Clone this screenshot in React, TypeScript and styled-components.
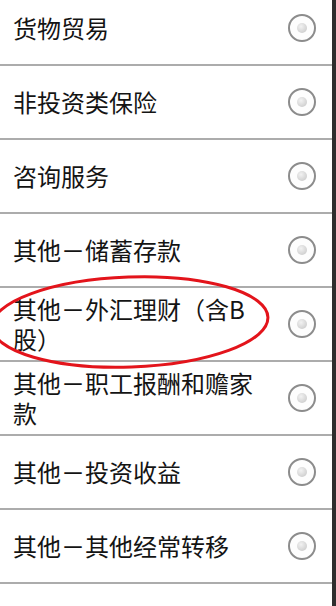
import React from "react";
import styled, { createGlobalStyle } from "styled-components";

const Global = createGlobalStyle`
  html, body { margin: 0; padding: 0; background: #fff; }
  body { font-family: "Noto Sans CJK SC", "Noto Sans", sans-serif; overflow: hidden; }
`;

const Page = styled.div`
  position: relative;
  width: 336px;
  height: 606px;
  overflow: hidden;
  box-sizing: border-box;
  border-right: 4px solid #2e2e2e;
  background: #fff;
`;

const List = styled.ul`
  list-style: none;
  margin: -8px 0 0 0;
  padding: 0;
`;

const Row = styled.li`
  display: flex;
  align-items: center;
  height: 72px;
  border-bottom: 2px solid #acacac;
  padding: 0 16px 0 13px;
  box-sizing: content-box;
`;

const Label = styled.span`
  width: 252px;
  font-size: 24px;
  line-height: 30px;
  color: #141414;
  word-break: normal;
`;

const Radio = styled.span`
  margin-left: auto;
  width: 28px;
  height: 28px;
  box-sizing: border-box;
  border: 2px solid #8c8c8c;
  border-radius: 50%;
  display: flex;
  align-items: center;
  justify-content: center;
  background: #fdfdfd;
  &::after {
    content: "";
    width: 10px;
    height: 10px;
    border-radius: 50%;
    background: radial-gradient(circle at 40% 35%, #f2f2f2, #c4c4c4);
  }
`;

const Mark = styled.svg`
  position: absolute;
  left: 0;
  top: 0;
  pointer-events: none;
`;

const items = [
  "货物贸易",
  "非投资类保险",
  "咨询服务",
  "其他－储蓄存款",
  "其他－外汇理财（含B股）",
  "其他－职工报酬和赡家款",
  "其他－投资收益",
  "其他－其他经常转移",
];

export default function App() {
  return (
    <>
      <Global />
      <Page>
        <List>
          {items.map((t) => (
            <Row key={t}>
              <Label>{t}</Label>
              <Radio />
            </Row>
          ))}
        </List>
        <Mark width="336" height="606" viewBox="0 0 336 606">
          <ellipse
            cx="130"
            cy="322"
            rx="138"
            ry="45"
            fill="none"
            stroke="#e3141b"
            strokeWidth="3"
            transform="rotate(-2 130 322)"
          />
        </Mark>
      </Page>
    </>
  );
}
